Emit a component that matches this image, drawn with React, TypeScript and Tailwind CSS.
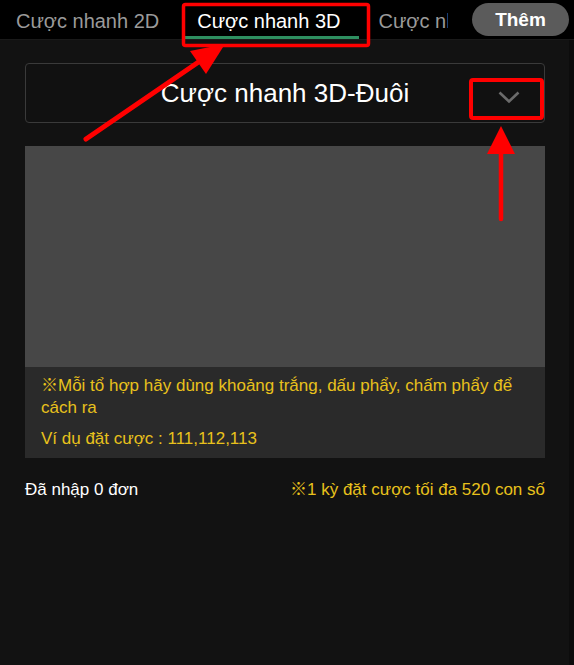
import React from 'react';

const tabs = ['Cược nhanh 2D', 'Cược nhanh 3D', 'Cược nhanh 4D'];

const Annotations = () => (
  <svg className="pointer-events-none absolute inset-0" width={574} height={665} viewBox="0 0 574 665">
    {/* box round the active tab */}
    <rect x={183.5} y={4.5} width={185} height={41} rx={2} fill="none" stroke="#ff0000" strokeWidth={3.5} />
    {/* box round the chevron */}
    <rect x={471} y={80} width={71} height={38} rx={2} fill="none" stroke="#ff0000" strokeWidth={4} />
    {/* diagonal arrow */}
    <line x1={86} y1={139} x2={200} y2={61} stroke="#ff0000" strokeWidth={5} strokeLinecap="round" />
    <polygon points="225,44 190,51 206,74" fill="#ff0000" />
    {/* vertical arrow */}
    <line x1={501} y1={150} x2={501} y2={219} stroke="#ff0000" strokeWidth={4.5} strokeLinecap="round" />
    <polygon points="501,126 487,154 515,154" fill="#ff0000" />
  </svg>
);

export default function App() {
  const active = 1;

  return (
    <div className="relative h-[665px] w-[574px] overflow-hidden bg-[#0c0c0c] font-['Liberation_Sans','Noto_Sans_CJK_SC',Arial,sans-serif]">
      {/* header */}
      <div className="flex h-[40px] w-full items-center border-b border-[#1a1a1a] bg-black">
        <div className="flex h-full w-[448px] overflow-hidden">
          <div className="-ml-[3px] flex h-full shrink-0">
            {tabs.map((t, i) => (
              <div
                key={t}
                className={`relative flex h-full shrink-0 items-center whitespace-nowrap px-[19px] pt-[2px] text-[20px] leading-[20px] ${
                  i === active ? 'text-white' : 'text-[#9a9a9a]'
                }`}
              >
                {t}
                {i === active && <div className="absolute bottom-0 left-[6px] right-[1px] h-[3px] bg-[#2e8f60]" />}
              </div>
            ))}
          </div>
        </div>
        <button className="ml-auto mr-[5px] flex h-[33px] w-[97px] items-center justify-center rounded-full bg-[#5b5b5b] text-[19px] font-bold leading-none text-white">
          Thêm
        </button>
      </div>

      {/* body */}
      <div className="h-[625px] w-[569px] bg-[#121212] px-[25px] pt-[23px]">
        <div className="relative flex h-[60px] w-[520px] items-center justify-center rounded-[4px] border border-[#3a3a3a] bg-[#111111]">
          <span className="text-[26px] leading-none text-white">Cược nhanh 3D-Đuôi</span>
          <svg className="absolute left-[472px] top-[27px]" width={22} height={13} viewBox="0 0 22 13">
            <polyline points="1.5,1.5 11,10.5 20.5,1.5" fill="none" stroke="#6b6b6b" strokeWidth={2.6} />
          </svg>
        </div>

        <div className="mt-[23px] w-[520px]">
          <textarea className="block h-[221px] w-full resize-none bg-[#474747] p-3 text-[17px] text-white outline-none" />
          <div className="bg-[#2a2a2a] px-[16px] pb-[8px] pt-[8px] text-[17px] leading-[22px] text-[#e8c11c]">
            <p>※Mỗi tổ hợp hãy dùng khoảng trắng, dấu phẩy, chấm phẩy để cách ra</p>
            <p className="mt-[9px]">Ví dụ đặt cược : 111,112,113</p>
          </div>
        </div>

        <div className="mt-[21px] flex w-[520px] items-center justify-between text-[17px] leading-[22px]">
          <span className="text-white">Đã nhập 0 đơn</span>
          <span className="text-[#e8c11c]">※1 kỳ đặt cược tối đa 520 con số</span>
        </div>
      </div>

      <Annotations />
    </div>
  );
}
